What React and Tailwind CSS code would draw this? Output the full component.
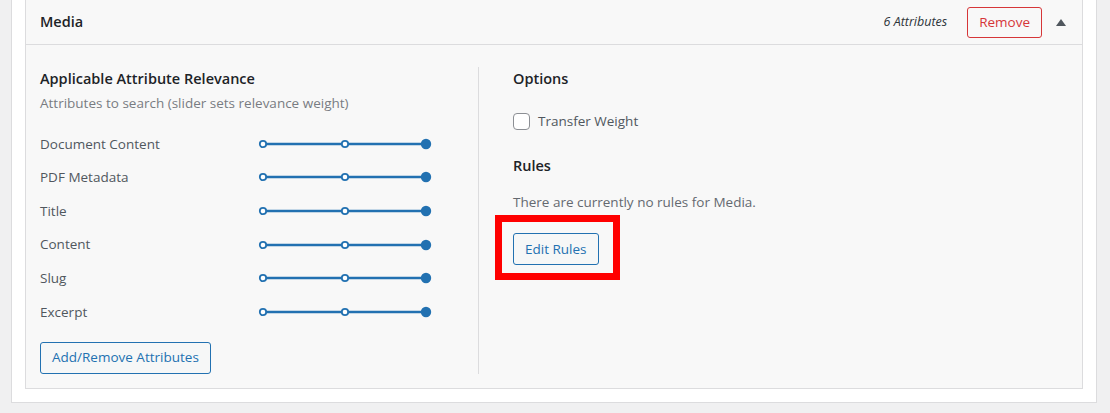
// Media attribute panel (settings-style card with relevance sliders)

const attributes = [
  "Document Content",
  "PDF Metadata",
  "Title",
  "Content",
  "Slug",
  "Excerpt",
];

const font = { fontFamily: '"Open Sans", "Noto Sans", sans-serif' };

// Three-stop slider, set to the heaviest weight
function Slider() {
  return (
    <svg width="180" height="14" viewBox="0 0 180 14" className="block">
      <line x1="5" y1="7" x2="168" y2="7" stroke="#2271b1" strokeWidth="2.5" />
      <circle cx="5" cy="7" r="3.2" fill="#fff" stroke="#2271b1" strokeWidth="1.8" />
      <circle cx="87" cy="7" r="3.2" fill="#fff" stroke="#2271b1" strokeWidth="1.8" />
      <circle cx="168" cy="7" r="5.2" fill="#2271b1" />
    </svg>
  );
}

export default function App() {
  return (
    <div className="h-[413px] w-[1110px] bg-[#f0f0f1] pl-[11px] pr-[13px]" style={font}>
      <div className="border-x border-b border-[#dcdcde] bg-white px-[13px] pb-[13px]">
        <div className="border-x border-b border-[#dcdcde] bg-[#f8f8f8]">
          {/* Header */}
          <div className="flex h-[45px] items-center border-b border-[#dcdcde] pl-[14px] pr-[15px]">
            <h2 className="flex-1 text-[14.5px] font-semibold text-[#1d2327]">Media</h2>
            <span className="mr-[20px] text-[12.5px] italic text-[#2c3338]">6 Attributes</span>
            <button className="h-[31px] rounded-[3px] border border-[#d63638] bg-[#f8f8f8] px-[11px] text-[13.5px] text-[#d63638]">
              Remove
            </button>
            <svg width="10" height="7" viewBox="0 0 10 7" className="ml-[14px] mr-[1px]">
              <path d="M5 0 L10 7 L0 7 Z" fill="#50575e" />
            </svg>
          </div>

          {/* Body */}
          <div className="flex pb-[14px] pt-[22px]">
            <div className="w-[453px] border-r border-[#dcdcde] pl-[14px] pt-[2px]">
              <h3 className="text-[14.5px] font-semibold leading-[20px] text-[#1d2327]">
                Applicable Attribute Relevance
              </h3>
              <p className="mt-[4px] text-[13.5px] leading-[20px] text-[#787c82]">
                Attributes to search (slider sets relevance weight)
              </p>
              <div className="mt-[14px]">
                {attributes.map((a) => (
                  <div key={a} className="flex h-[33.6px] items-center">
                    <span className="w-[218px] text-[13.5px] text-[#50575e]">{a}</span>
                    <Slider />
                  </div>
                ))}
              </div>
              <button className="mt-[13px] h-[32px] rounded-[3px] border border-[#2271b1] bg-[#f6f7f7] px-[11px] text-[13.5px] text-[#2271b1]">
                Add/Remove Attributes
              </button>
            </div>

            <div className="pl-[34px] pt-[2px]">
              <h3 className="text-[14.5px] font-semibold leading-[20px] text-[#1d2327]">Options</h3>
              <label className="mt-[22px] flex items-center">
                <span className="h-[17px] w-[17px] rounded-[4px] border border-[#8c8f94] bg-white" />
                <span className="ml-[8px] text-[13.5px] text-[#50575e]">Transfer Weight</span>
              </label>
              <h3 className="mt-[25px] text-[14.5px] font-semibold leading-[20px] text-[#1d2327]">Rules</h3>
              <p className="mt-[16px] text-[13.5px] leading-[20px] text-[#646970]">
                There are currently no rules for Media.
              </p>
              <div className="relative mt-[21px] inline-block">
                <button className="h-[32px] rounded-[3px] border border-[#2271b1] bg-[#f6f7f7] px-[11px] text-[13.5px] text-[#2271b1]">
                  Edit Rules
                </button>
                <div className="pointer-events-none absolute left-[-18px] top-[-18px] h-[65px] w-[125px] border-[7px] border-[#ff0000]" />
              </div>
            </div>
          </div>
        </div>
      </div>
    </div>
  );
}
